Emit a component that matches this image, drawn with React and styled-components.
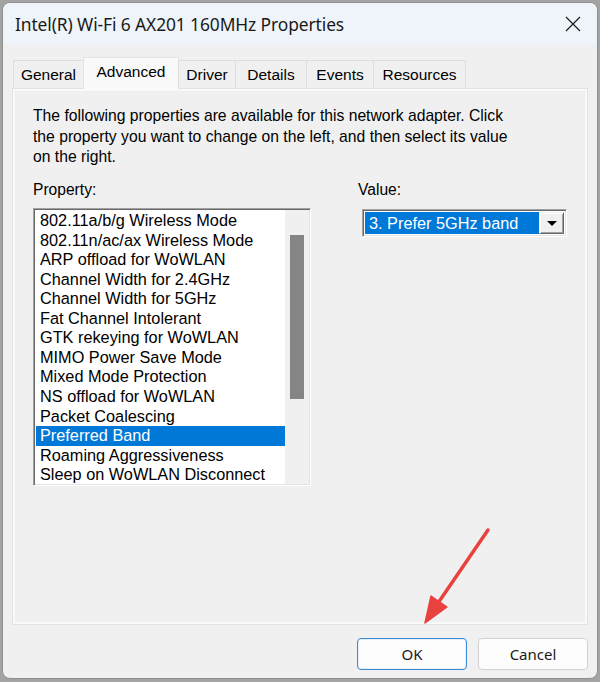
import React from "react";
import styled, { createGlobalStyle } from "styled-components";

const GlobalStyle = createGlobalStyle`
  html, body {
    margin: 0;
    padding: 0;
    background: #a3a3a3;
  }
  #root {
    width: 600px;
    height: 682px;
  }
`;

const properties = [
  "802.11a/b/g Wireless Mode",
  "802.11n/ac/ax Wireless Mode",
  "ARP offload for WoWLAN",
  "Channel Width for 2.4GHz",
  "Channel Width for 5GHz",
  "Fat Channel Intolerant",
  "GTK rekeying for WoWLAN",
  "MIMO Power Save Mode",
  "Mixed Mode Protection",
  "NS offload for WoWLAN",
  "Packet Coalescing",
  "Preferred Band",
  "Roaming Aggressiveness",
  "Sleep on WoWLAN Disconnect",
];

const tabs = [
  { label: "General", w: 71 },
  { label: "Advanced", w: 96 },
  { label: "Driver", w: 58 },
  { label: "Details", w: 72 },
  { label: "Events", w: 68 },
  { label: "Resources", w: 93 },
];

const Page = styled.div`
  position: relative;
  width: 600px;
  height: 682px;
  padding: 2px 2px 3px 2px;
  box-sizing: border-box;
  overflow: hidden;
`;

const Window = styled.div`
  height: 100%;
  display: flex;
  flex-direction: column;
  background: #f0f0f0;
  border: 1px solid #8f8f8f;
  border-radius: 8px;
  overflow: hidden;
  box-sizing: border-box;
`;

const TitleBar = styled.div`
  height: 42px;
  flex: none;
  display: flex;
  align-items: center;
  justify-content: space-between;
  padding: 0 13px 0 12px;
  background: #eef4f9;
`;

const Title = styled.span`
  font-family: "Noto Sans", "Open Sans", sans-serif;
  font-size: 17.4px;
  color: #1a1a1a;
  letter-spacing: -0.1px;
`;

const CloseIcon = styled.svg`
  width: 16px;
  height: 16px;
  margin-right: 3px;
`;

const Body = styled.div`
  flex: 1;
  display: flex;
  flex-direction: column;
  padding: 11px 9px 0 9px;
  font-family: "Liberation Sans", Arial, sans-serif;
  color: #000;
`;

const TabStrip = styled.div`
  display: flex;
  align-items: flex-end;
  height: 32px;
  padding-left: 2px;
  position: relative;
  z-index: 1;
`;

const Tab = styled.div`
  height: ${(p) => (p.$active ? "32px" : "28px")};
  width: ${(p) => p.$w}px;
  box-sizing: border-box;
  display: flex;
  align-items: center;
  justify-content: center;
  padding-bottom: ${(p) => (p.$active ? "3px" : "0")};
  margin-bottom: ${(p) => (p.$active ? "-1px" : "0")};
  font-size: 15.5px;
  background: ${(p) => (p.$active ? "#f9f9f9" : "#f0f0f0")};
  border: 1px solid ${(p) => (p.$active ? "#e4e4e4" : "#dddddd")};
  border-bottom: none;
  margin-left: -1px;
`;

const Panel = styled.div`
  height: 537px;
  box-sizing: border-box;
  border: 1px solid #e2e2e2;
  box-shadow: inset 0 0 0 1px #fbfbfb, inset 0 0 0 2px #f6f6f6;
  padding: 17px 20px 0 20px;
`;

const Description = styled.p`
  margin: 0;
  font-size: 15.7px;
  line-height: 20.7px;
  white-space: nowrap;
`;

const Columns = styled.div`
  display: grid;
  grid-template-columns: 278px 1fr;
  column-gap: 47px;
  margin-top: 12px;
`;

const Label = styled.div`
  font-size: 15.6px;
  line-height: 20px;
  margin-bottom: 8px;
`;

const ListBox = styled.div`
  width: 278px;
  height: 278px;
  box-sizing: border-box;
  display: flex;
  background: #fff;
  border-style: solid;
  border-width: 1px;
  border-color: #a0a0a0 #ffffff #ffffff #a0a0a0;
  box-shadow: inset 1px 1px 0 #696969, inset -1px -1px 0 #e3e3e3;
  padding: 1px;
`;

const Items = styled.div`
  flex: 1;
  overflow: hidden;
  padding: 1px 0 0 1px;
`;

const Item = styled.div`
  height: 19.55px;
  line-height: 19.55px;
  padding-left: 4px;
  font-size: 16.3px;
  white-space: nowrap;
  background: ${(p) => (p.$selected ? "#0078d7" : "transparent")};
  color: ${(p) => (p.$selected ? "#fff" : "#000")};
`;

const ScrollTrack = styled.div`
  width: 24px;
  flex: none;
  background: #f0f0f0;
  display: flex;
  justify-content: center;
  padding-top: 25px;
  box-sizing: border-box;
`;

const ScrollThumb = styled.div`
  width: 14px;
  height: 164px;
  background: #858585;
`;

const ValueCol = styled.div`
  display: flex;
  flex-direction: column;
`;

const Select = styled.div`
  margin: 1px 0 0 4px;
  width: 205px;
  height: 28px;
  box-sizing: border-box;
  display: flex;
  background: #fff;
  border-style: solid;
  border-width: 1px;
  border-color: #a0a0a0 #ffffff #ffffff #a0a0a0;
  box-shadow: inset 1px 1px 0 #696969, inset -1px -1px 0 #e3e3e3;
  padding: 2px;
`;

const SelectedValue = styled.div`
  flex: 1;
  background: #0078d7;
  color: #fff;
  font-size: 16.3px;
  line-height: 22px;
  padding-left: 4px;
  white-space: nowrap;
`;

const DropButton = styled.div`
  width: 25px;
  flex: none;
  box-sizing: border-box;
  display: flex;
  align-items: center;
  justify-content: center;
  background: #f0f0f0;
  border-style: solid;
  border-width: 1px;
  border-color: #f0f0f0 #696969 #696969 #f0f0f0;
  box-shadow: inset 1px 1px 0 #ffffff, inset -1px -1px 0 #a0a0a0;
`;

const Triangle = styled.span`
  width: 0;
  height: 0;
  border-left: 5px solid transparent;
  border-right: 5px solid transparent;
  border-top: 5px solid #000;
`;

const Footer = styled.div`
  display: flex;
  justify-content: flex-end;
  gap: 11px;
  padding-top: 13px;
`;

const Button = styled.button`
  width: 110px;
  height: 32px;
  box-sizing: border-box;
  border-radius: 4px;
  background: #fdfdfd;
  border: 1px solid ${(p) => (p.$default ? "#3b8ad6" : "#d1d1d1")};
  box-shadow: ${(p) => (p.$default ? "inset 0 0 0 1px #e6f0fa" : "none")};
  font-family: "Noto Sans", "Open Sans", sans-serif;
  font-size: 15px;
  color: #1a1a1a;
  padding: 0;
`;

const Overlay = styled.svg`
  position: absolute;
  left: 0;
  top: 0;
  width: 600px;
  height: 682px;
  pointer-events: none;
`;

export default function App() {
  return (
    <>
      <GlobalStyle />
      <Page>
        <Window>
          <TitleBar>
            <Title>Intel(R) Wi-Fi 6 AX201 160MHz Properties</Title>
            <CloseIcon viewBox="0 0 16 16">
              <path d="M1 1 L15 15 M15 1 L1 15" stroke="#1b1b1b" strokeWidth="1.2" fill="none" />
            </CloseIcon>
          </TitleBar>
          <Body>
            <TabStrip>
              {tabs.map((t) => (
                <Tab key={t.label} $w={t.w} $active={t.label === "Advanced"}>
                  {t.label}
                </Tab>
              ))}
            </TabStrip>
            <Panel>
              <Description>
                The following properties are available for this network adapter. Click
                <br />
                the property you want to change on the left, and then select its value
                <br />
                on the right.
              </Description>
              <Columns>
                <div>
                  <Label>Property:</Label>
                  <ListBox>
                    <Items>
                      {properties.map((p) => (
                        <Item key={p} $selected={p === "Preferred Band"}>
                          {p}
                        </Item>
                      ))}
                    </Items>
                    <ScrollTrack>
                      <ScrollThumb />
                    </ScrollTrack>
                  </ListBox>
                </div>
                <ValueCol>
                  <Label>Value:</Label>
                  <Select>
                    <SelectedValue>3. Prefer 5GHz band</SelectedValue>
                    <DropButton>
                      <Triangle />
                    </DropButton>
                  </Select>
                </ValueCol>
              </Columns>
            </Panel>
            <Footer>
              <Button $default>OK</Button>
              <Button>Cancel</Button>
            </Footer>
          </Body>
        </Window>
        <Overlay viewBox="0 0 600 682">
          <line x1="488" y1="530" x2="436" y2="606" stroke="#e8423f" strokeWidth="3.5" strokeLinecap="round" />
          <polygon points="425,623 431,596 447,607" fill="#e8423f" stroke="#e8423f" strokeWidth="1.5" strokeLinejoin="round" />
        </Overlay>
      </Page>
    </>
  );
}
